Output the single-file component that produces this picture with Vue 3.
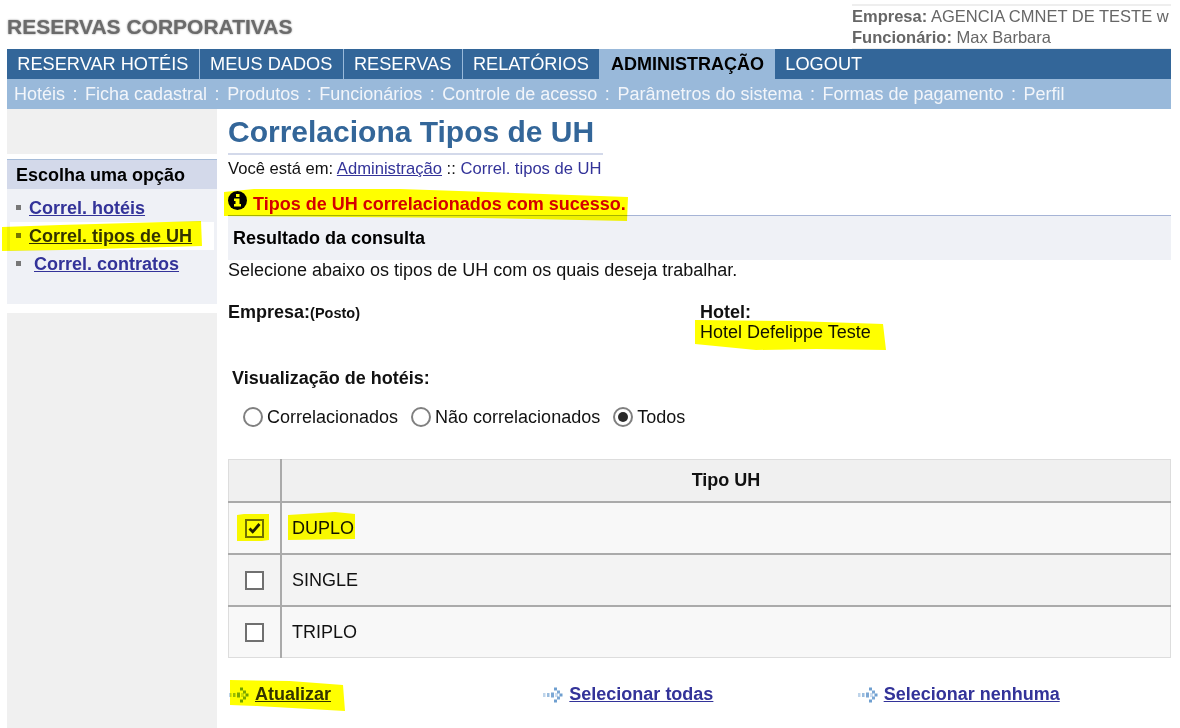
<template>
  <div class="page">
    <header class="top">
      <div class="logo">RESERVAS CORPORATIVAS</div>
      <div class="who">
        <p><b>Empresa:</b> AGENCIA CMNET DE TESTE w</p>
        <p><b>Funcionário:</b> Max Barbara</p>
      </div>
    </header>

    <nav class="nav">
      <a v-for="item in navItems" :key="item" :class="{ on: item === 'ADMINISTRAÇÃO' }">{{ item }}</a>
    </nav>
    <nav class="subnav">
      <template v-for="(item, i) in subItems" :key="item">
        <span v-if="i > 0" class="sep">:</span>
        <a>{{ item }}</a>
      </template>
    </nav>

    <div class="body">
      <aside class="side">
        <div class="side-top"></div>
        <div class="menu">
          <h3>Escolha uma opção</h3>
          <ul>
            <li><a>Correl. hotéis</a></li>
            <li class="current"><a>Correl. tipos de UH</a></li>
            <li class="shifted"><a>Correl. contratos</a></li>
          </ul>
        </div>
        <div class="side-rest"></div>
      </aside>

      <main class="main">
        <h1>Correlaciona Tipos de UH</h1>
        <p class="crumb">Você está em: <a>Administração</a> :: <span>Correl. tipos de UH</span></p>

        <p class="msg">
          <svg class="info" width="19" height="19" viewBox="0 0 19 19">
            <circle cx="9.500" cy="9.500" r="9.500" fill="#000" />
            <rect x="8" y="3" width="3.500" height="3" fill="#fff" />
            <path d="M6 7.500h5.500V13H13v2.500H6V13h1.500v-3H6z" fill="#fff" />
          </svg>
          <span>Tipos de UH correlacionados com sucesso.</span>
        </p>

        <h2 class="result">Resultado da consulta</h2>
        <p class="hint">Selecione abaixo os tipos de UH com os quais deseja trabalhar.</p>

        <div class="info-row">
          <div class="company"><b>Empresa:</b><small>(Posto)</small></div>
          <div class="hotel"><b>Hotel:</b><span>Hotel Defelippe Teste</span></div>
        </div>

        <h4 class="view-title">Visualização de hotéis:</h4>
        <div class="radios">
          <label v-for="r in radios" :key="r">
            <span class="radio" :class="{ checked: r === 'Todos' }"></span>{{ r }}
          </label>
        </div>

        <table class="grid">
          <thead>
            <tr><th class="c1"></th><th>Tipo UH</th></tr>
          </thead>
          <tbody>
            <tr v-for="row in rows" :key="row.name">
              <td class="c1">
                <span class="check">
                  <svg v-if="row.checked" width="15" height="15" viewBox="0 0 15 15">
                    <path d="M2.500 7.500l3.200 3.300L12.500 3" fill="none" stroke="#222" stroke-width="2.800" />
                  </svg>
                </span>
              </td>
              <td class="name">{{ row.name }}</td>
            </tr>
          </tbody>
        </table>

        <div class="actions">
          <a v-for="a in actions" :key="a" class="action">
            <svg width="24" height="18" viewBox="0 0 24 18">
              <g fill="#6f9fd0">
                <rect x="1" y="7" width="2.500" height="4" opacity=".45" />
                <rect x="5" y="7" width="2.500" height="4" opacity=".7" />
                <rect x="9" y="6.500" width="3" height="5" opacity=".9" />
                <rect x="12" y="1.500" width="3" height="3" />
                <rect x="15" y="4.500" width="3" height="3" opacity=".9" />
                <rect x="17.500" y="7.500" width="3" height="3" />
                <rect x="15" y="10.500" width="3" height="3" opacity=".9" />
                <rect x="12" y="13.500" width="3" height="3" />
                <rect x="13" y="7" width="3" height="4" opacity=".35" />
              </g>
            </svg>
            <span>{{ a }}</span>
          </a>
        </div>
      </main>
    </div>

    <!-- marca-texto amarelo por cima da tela -->
    <svg class="marker" width="1180" height="728" viewBox="0 0 1180 728">
      <g fill="#ffff00">
        <path d="M2 227l58-2 141-4 1 25-140 4-60 1z" />
        <path d="M224 192l30-3 146 0 228 8 -1 24-147-3-256-2z" />
        <path d="M695 320l100 1 88 3 3 26-70-1-60 1-61-6z" />
        <path d="M237 515l7-1 25 0 0 26-7 1-25 0z" />
        <path d="M288 515l47-3 20 2 0 25-67 1z" />
        <path d="M230 680l60 1 53 4 2 26-88-5-27-1z" />
      </g>
    </svg>
  </div>
</template>

<script setup>
const navItems = ['RESERVAR HOTÉIS', 'MEUS DADOS', 'RESERVAS', 'RELATÓRIOS', 'ADMINISTRAÇÃO', 'LOGOUT']
const subItems = ['Hotéis', 'Ficha cadastral', 'Produtos', 'Funcionários', 'Controle de acesso', 'Parâmetros do sistema', 'Formas de pagamento', 'Perfil']
const radios = ['Correlacionados', 'Não correlacionados', 'Todos']
const rows = [
  { name: 'DUPLO', checked: true },
  { name: 'SINGLE', checked: false },
  { name: 'TRIPLO', checked: false }
]
const actions = ['Atualizar', 'Selecionar todas', 'Selecionar nenhuma']
</script>

<style>
html, body {
  background: #fff;
  overflow: hidden;
}
</style>

<style scoped>
.page {
  position: relative;
  width: 1180px;
  height: 728px;
  overflow: hidden;
  font-family: "Liberation Sans", Arial, sans-serif;
  font-size: 18px;
  color: #111;
}

p, h1, h2, h3, h4, ul {
  margin: 0;
  padding: 0;
}

.top {
  display: flex;
  justify-content: space-between;
  height: 49px;
  padding: 4px 9px 0 7px;
  box-sizing: border-box;
}

.logo {
  margin-top: 11px;
  font-size: 21px;
  font-weight: bold;
  color: #6b6b6b;
  text-shadow: 0 0 2px #888;
}

.who {
  width: 319px;
  height: 45px;
  box-sizing: border-box;
  border-top: 2px solid #eee;
  border-bottom: 1px solid #eee;
  overflow: hidden;
  white-space: nowrap;
  color: #666;
  font-size: 16.500px;
  line-height: 21px;
}

.nav {
  display: flex;
  margin: 0 9px 0 7px;
  height: 30px;
  background: #336699;
}

.nav a {
  padding: 0 10.300px;
  line-height: 30px;
  font-size: 18.200px;
  color: #fff;
  border-right: 1px solid #99b9da;
}

.nav a.on {
  padding: 0 11px;
  background: #99b9da;
  color: #000;
  font-weight: bold;
  font-size: 18px;
  border-right: 0;
}

.nav a:last-child {
  border-right: 0;
}

.subnav {
  display: flex;
  gap: 7.500px;
  margin: 0 9px 0 7px;
  padding-left: 7px;
  height: 30px;
  line-height: 31px;
  background: #99b9da;
  color: #f2f5fa;
}

.body {
  display: flex;
  margin-left: 7px;
}

.side {
  width: 210px;
  flex-shrink: 0;
}

.side-top {
  height: 45px;
  background: #f0f0f0;
}

.menu {
  height: 145px;
  margin-top: 5px;
  background: #eff1f6;
}

.menu h3 {
  height: 30px;
  padding-left: 9px;
  box-sizing: border-box;
  border-top: 1px solid #a6bcd9;
  background: #d3d9ea;
  font-size: 18px;
  line-height: 30px;
  color: #000;
}

.menu ul {
  list-style: none;
  padding-top: 5px;
}

.menu li {
  position: relative;
  height: 28px;
  margin: 0 3px;
  padding-left: 19px;
  line-height: 28px;
  font-weight: bold;
}

.menu li::before {
  content: "";
  position: absolute;
  left: 6px;
  top: 11px;
  width: 5px;
  height: 5px;
  background: #777;
}

.menu li a {
  color: #333399;
  text-decoration: underline;
}

.menu li.current {
  background: #fff;
}

.menu li.shifted {
  padding-left: 24px;
}

.side-rest {
  height: 415px;
  margin-top: 9px;
  background: #f0f0f0;
}

.main {
  flex: 1;
  margin: 0 9px 0 11px;
  min-width: 0;
}

h1 {
  width: 375px;
  height: 46px;
  box-sizing: border-box;
  border-bottom: 2px solid #d3d9ea;
  font-size: 30px;
  line-height: 46px;
  color: #336699;
}

.crumb {
  margin-top: 5px;
  line-height: 18px;
  font-size: 16.600px;
}

.crumb a {
  color: #333399;
  text-decoration: underline;
}

.crumb span {
  color: #333399;
}

.msg {
  display: flex;
  align-items: center;
  gap: 6px;
  margin-top: 11px;
  height: 26px;
  font-weight: bold;
  color: #d40000;
}

.msg .info {
  margin-top: -4px;
}

.msg span {
  padding-top: 4px;
}

.result {
  height: 45px;
  padding-left: 5px;
  box-sizing: border-box;
  border-top: 1px solid #a6b4d6;
  background: #eff1f6;
  font-size: 18px;
  line-height: 44px;
  color: #000;
}

.hint {
  line-height: 20px;
}

.info-row {
  display: flex;
  margin-top: 22px;
}

.company {
  width: 472px;
  line-height: 20px;
}

.company small {
  font-size: 14.500px;
  font-weight: bold;
}

.hotel {
  display: flex;
  flex-direction: column;
  line-height: 20px;
}

.view-title {
  margin-top: 26px;
  margin-left: 4px;
  font-size: 18px;
  line-height: 20px;
}

.radios {
  display: flex;
  gap: 13px;
  margin: 18px 0 0 15px;
  line-height: 22px;
}

.radios label {
  display: flex;
  align-items: center;
  gap: 4px;
}

.radio {
  position: relative;
  width: 20px;
  height: 20px;
  border: 2px solid #808080;
  border-radius: 50%;
  box-sizing: border-box;
}

.radio.checked::after {
  content: "";
  position: absolute;
  left: 3px;
  top: 3px;
  width: 10px;
  height: 10px;
  border-radius: 50%;
  background: #2a2a2a;
}

.grid {
  width: 100%;
  margin-top: 31px;
  border-collapse: collapse;
  border: 1px solid #ddd;
}

.grid th {
  height: 39px;
  background: #f0f0f0;
  border-bottom: 2px solid #aaa;
  color: #111;
}

.grid td {
  height: 48px;
  background: #f8f8f8;
  border-bottom: 2px solid #aaa;
}

.grid tr:nth-child(2) td {
  background: #f3f3f3;
}

.grid tr:last-child td {
  border-bottom: 0;
}

.grid .c1 {
  width: 49px;
  border-right: 2px solid #aaa;
  text-align: center;
}

.grid .name {
  padding-left: 10px;
}

.check {
  display: inline-flex;
  align-items: center;
  justify-content: center;
  width: 19px;
  height: 19px;
  box-sizing: border-box;
  border: 2px solid #707070;
  background: #fff;
  vertical-align: middle;
}

.actions {
  display: flex;
  margin-top: 26px;
}

.action {
  display: flex;
  align-items: center;
  gap: 3px;
  width: 314.500px;
  font-weight: bold;
  color: #333399;
}

.action span {
  text-decoration: underline;
}

.marker {
  position: absolute;
  left: 0;
  top: 0;
  mix-blend-mode: multiply;
  pointer-events: none;
}
</style>
